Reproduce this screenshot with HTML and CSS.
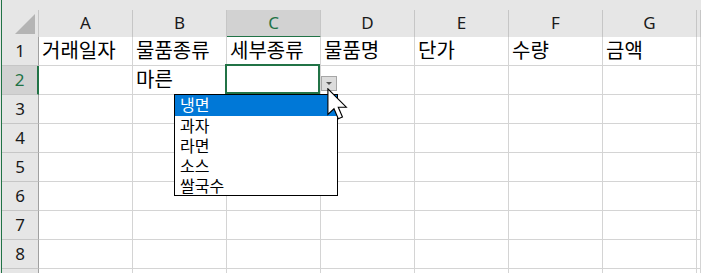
FILE: index.html
```html
<!DOCTYPE html>
<html lang="ko">
<head>
    <meta charset="UTF-8">
    <meta name="viewport" content="width=device-width, initial-scale=1.0">
    <title>거래 목록</title>
    <link rel="stylesheet" href="styles.css">
</head>
<body>
  <div class="sheet">
    <div class="row head">
      <div class="corner">
        <svg width="20" height="20" viewBox="0 0 20 20"><polygon points="0,20 20,0 20,20" fill="#b4b4b4"/></svg>
      </div>
      <div class="col">A</div>
      <div class="col">B</div>
      <div class="col active">C</div>
      <div class="col">D</div>
      <div class="col">E</div>
      <div class="col">F</div>
      <div class="col">G</div>
      <div class="col"></div>
    </div>

    <div class="row">
      <div class="rh">1</div>
      <div class="cell">거래일자</div>
      <div class="cell">물품종류</div>
      <div class="cell">세부종류</div>
      <div class="cell">물품명</div>
      <div class="cell">단가</div>
      <div class="cell">수량</div>
      <div class="cell">금액</div>
      <div class="cell"></div>
    </div>

    <div class="row">
      <div class="rh active">2</div>
      <div class="cell"></div>
      <div class="cell">마른</div>
      <div class="cell selected">
        <div class="sel-box"></div>
        <div class="drop-btn"></div>
        <ul class="drop-list">
          <li class="on">냉면</li>
          <li>과자</li>
          <li>라면</li>
          <li>소스</li>
          <li>쌀국수</li>
        </ul>
        <svg class="cursor" width="21" height="32" viewBox="0 0 13 20">
          <path d="M0.5 0.5 L0.5 16.5 L4.3 13 L7 19.2 L9.6 18.1 L7 12 L12 12 Z" fill="#fff" stroke="#000" stroke-width="0.7" stroke-linejoin="miter"/>
        </svg>
      </div>
      <div class="cell"></div>
      <div class="cell"></div>
      <div class="cell"></div>
      <div class="cell"></div>
      <div class="cell"></div>
    </div>

    <div class="row"><div class="rh">3</div><div class="cell"></div><div class="cell"></div><div class="cell"></div><div class="cell"></div><div class="cell"></div><div class="cell"></div><div class="cell"></div><div class="cell"></div></div>
    <div class="row"><div class="rh">4</div><div class="cell"></div><div class="cell"></div><div class="cell"></div><div class="cell"></div><div class="cell"></div><div class="cell"></div><div class="cell"></div><div class="cell"></div></div>
    <div class="row"><div class="rh">5</div><div class="cell"></div><div class="cell"></div><div class="cell"></div><div class="cell"></div><div class="cell"></div><div class="cell"></div><div class="cell"></div><div class="cell"></div></div>
    <div class="row"><div class="rh">6</div><div class="cell"></div><div class="cell"></div><div class="cell"></div><div class="cell"></div><div class="cell"></div><div class="cell"></div><div class="cell"></div><div class="cell"></div></div>
    <div class="row"><div class="rh">7</div><div class="cell"></div><div class="cell"></div><div class="cell"></div><div class="cell"></div><div class="cell"></div><div class="cell"></div><div class="cell"></div><div class="cell"></div></div>
    <div class="row"><div class="rh">8</div><div class="cell"></div><div class="cell"></div><div class="cell"></div><div class="cell"></div><div class="cell"></div><div class="cell"></div><div class="cell"></div><div class="cell"></div></div>
    <div class="row"><div class="rh"></div><div class="cell"></div><div class="cell"></div><div class="cell"></div><div class="cell"></div><div class="cell"></div><div class="cell"></div><div class="cell"></div><div class="cell"></div></div>
  </div>
</body>
</html>
```

FILE: styles.css
```css
body {
    margin: 0;
    background-color: #e6e6e6;
    font-family: 'Noto Sans', 'Noto Sans CJK KR', sans-serif;
    overflow: hidden;
    height: 273px;
}

.sheet {
    margin-left: 1px;
    border-left: 1px solid #217346;
    padding-top: 10px;
    background-color: #e6e6e6;
}

.row {
    display: grid;
    grid-template-columns: 37px repeat(7, 94px) 1fr;
    height: 29px;
}

.row.head {
    height: 27px;
}

.row > div {
    box-sizing: border-box;
}

.corner {
    border-right: 1px solid #c6c6c6;
    border-bottom: 1px solid #a0a0a0;
    padding: 4px 0 0 13px;
}

.corner svg {
    display: block;
}

.col {
    background-color: #e6e6e6;
    border-right: 1px solid #c6c6c6;
    border-bottom: 1px solid #a0a0a0;
    text-align: center;
    font-size: 17px;
    line-height: 26px;
    color: #1a1a1a;
}

.col.active {
    background-color: #d2d2d2;
    color: #217346;
    border-bottom: 2px solid #217346;
}

.rh {
    background-color: #e6e6e6;
    border-right: 1px solid #a0a0a0;
    border-bottom: 1px solid #c6c6c6;
    text-align: center;
    font-size: 17px;
    line-height: 28px;
    color: #1a1a1a;
}

.rh.active {
    background-color: #d2d2d2;
    color: #217346;
    border-right: 2px solid #217346;
}

.cell {
    background-color: #ffffff;
    border-right: 1px solid #d4d4d4;
    border-bottom: 1px solid #d4d4d4;
    padding-left: 3px;
    font-size: 20px;
    line-height: 27px;
    color: #000000;
    white-space: nowrap;
}

.cell.selected {
    position: relative;
    z-index: 2;
}

.sel-box {
    position: absolute;
    top: -2px;
    left: -2px;
    right: 0;
    bottom: 0;
    border: 2px solid #217346;
}

.drop-btn {
    position: absolute;
    top: 10px;
    left: 94px;
    width: 16px;
    height: 15px;
    box-sizing: border-box;
    background-color: #dcdcdc;
    border: 1px solid #a6a6a6;
}

.drop-btn::after {
    content: "";
    position: absolute;
    left: 4px;
    top: 5px;
    border-left: 3px solid transparent;
    border-right: 3px solid transparent;
    border-top: 3px solid #555555;
}

.drop-list {
    position: absolute;
    top: 28px;
    left: -53px;
    width: 164px;
    height: 102px;
    box-sizing: border-box;
    margin: 0;
    padding: 0;
    list-style-type: none;
    background-color: #ffffff;
    border: 1px solid #000000;
    font-size: 16px;
    line-height: 20px;
}

.drop-list li {
    padding-left: 5px;
    height: 20px;
}

.drop-list li.on {
    background-color: #0078d7;
    color: #ffffff;
    height: 21px;
    line-height: 21px;
}

.cursor {
    position: absolute;
    left: 100px;
    top: 22px;
    z-index: 3;
}
```
